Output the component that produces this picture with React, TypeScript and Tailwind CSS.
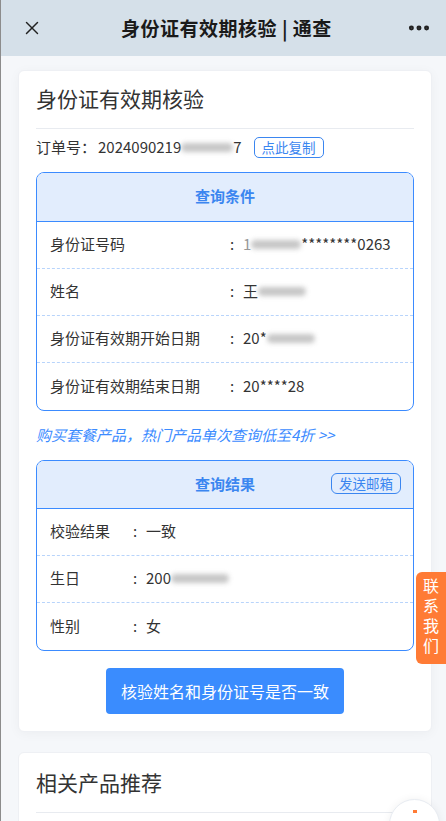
import { X, MoreHorizontal } from 'lucide-react'

const FONT = { fontFamily: '"Noto Sans CJK SC", "Liberation Sans", sans-serif' }

// blurred value stand-in
function Smudge({ w }: { w: number }) {
  return (
    <span className="inline-block h-[9px] align-middle rounded-full bg-[#a0a0a0] opacity-60 blur-[2.5px]" style={{ width: w }} />
  )
}

function Row({ label, colonX, children, last }: { label: string; colonX: string; children: React.ReactNode; last?: boolean }) {
  return (
    <div className={`flex items-center h-[47px] px-[13px] text-[15px] text-[#333] ${last ? '' : 'border-b border-dashed border-[#b8d4fb]'}`}>
      <span className={colonX}>{label}</span>
      <span className="w-[13px]">:</span>
      <span className="flex items-center">{children}</span>
    </div>
  )
}

export default function App() {
  return (
    <div className="relative h-[821px] overflow-hidden bg-[#f5f7fa] border-l border-[#8c8c8c]" style={FONT}>
      {/* Top bar */}
      <header className="h-[56px] bg-[#d5e0e9] grid grid-cols-[1fr_auto_1fr] items-center pl-[20px] pr-[14px]">
        <X size={22} strokeWidth={1.6} className="text-[#222]" />
        <h1 className="text-[19px] font-bold text-[#1a1a1a] tracking-[0.5px]">身份证有效期核验 | 通查</h1>
        <MoreHorizontal size={26} strokeWidth={2.6} className="text-[#222] justify-self-end" />
      </header>

      {/* Main card */}
      <section className="ml-[17px] mr-[14px] mt-[14px] bg-white rounded-[6px] border border-[#eef0f4] shadow-[0_2px_12px_rgba(0,0,0,0.04)] px-[17px] pb-[17px]">
        <h2 className="text-[21px] text-[#333] pt-[12px] pb-[13px] border-b border-[#e8ebf0]">身份证有效期核验</h2>

        <div className="flex items-center h-[38px] text-[15px] text-[#333]">
          <span>订单号：</span>
          <span className="ml-[2px]">2024090219</span>
          <Smudge w={52} />
          <span>7</span>
          <span className="ml-[12px] text-[13.5px] text-[#3b86f0] border border-[#3b86f0] rounded-[5px] px-[7px] leading-[19px]">点此复制</span>
        </div>

        {/* Query conditions */}
        <div className="mt-[5px] border border-[#3b8bff] rounded-[8px] overflow-hidden">
          <div className="h-[49px] bg-[#e2edfd] border-b border-[#3b8bff] flex items-center justify-center text-[15px] font-bold text-[#3b86f0]">
            查询条件
          </div>
          <Row label="身份证号码" colonX="w-[180px]">
            <span className="text-[#999]">1</span>
            <Smudge w={50} />
            <span>********0263</span>
          </Row>
          <Row label="姓名" colonX="w-[180px]">
            <span>王</span>
            <Smudge w={48} />
          </Row>
          <Row label="身份证有效期开始日期" colonX="w-[180px]">
            <span>20*</span>
            <Smudge w={48} />
          </Row>
          <Row label="身份证有效期结束日期" colonX="w-[180px]" last>
            <span>20****28</span>
          </Row>
        </div>

        <p className="mt-[14px] text-[15px] italic text-[#3b8bff] leading-[20px]">购买套餐产品，热门产品单次查询低至4折 &gt;&gt;</p>

        {/* Query results */}
        <div className="mt-[15px] border border-[#3b8bff] rounded-[8px] overflow-hidden">
          <div className="relative h-[48px] bg-[#e2edfd] border-b border-[#3b8bff] flex items-center justify-center text-[15px] font-bold text-[#3b86f0]">
            查询结果
            <span className="absolute right-[12px] top-[12px] text-[13.5px] font-normal text-[#3b86f0] border border-[#3b86f0] rounded-[6px] px-[7px] leading-[19px]">发送邮箱</span>
          </div>
          <Row label="校验结果" colonX="w-[83px]">
            <span>一致</span>
          </Row>
          <Row label="生日" colonX="w-[83px]">
            <span>200</span>
            <Smudge w={58} />
          </Row>
          <Row label="性别" colonX="w-[83px]" last>
            <span>女</span>
          </Row>
        </div>

        <div className="flex justify-center mt-[17px]">
          <button className="w-[238px] h-[46px] rounded-[4px] bg-[#3a8cfe] text-white text-[16px]">核验姓名和身份证号是否一致</button>
        </div>
      </section>

      {/* Related products */}
      <section className="ml-[17px] mr-[14px] mt-[20px] bg-white rounded-[6px] border border-[#eef0f4] px-[17px] h-[120px]">
        <h2 className="text-[21px] text-[#333] pt-[14px] pb-[14px] border-b border-[#e8ebf0]">相关产品推荐</h2>
      </section>

      {/* Contact tab */}
      <div className="absolute right-0 top-[572px] w-[30px] h-[92px] bg-[#ff7b35] rounded-l-[6px] flex items-center justify-center text-white text-[16px]">
        <span className="[writing-mode:vertical-rl] tracking-[4px] leading-[30px]">联系我们</span>
      </div>

      {/* Floating circle */}
      <div className="absolute left-[388px] top-[799px] w-[51px] h-[51px] rounded-full bg-white border border-[#e8ecf2] shadow-[0_0_8px_rgba(0,0,0,0.06)] flex justify-center">
        <span className="mt-[10px] w-[4px] h-[3px] bg-[#ff7b35]" />
      </div>
    </div>
  )
}
